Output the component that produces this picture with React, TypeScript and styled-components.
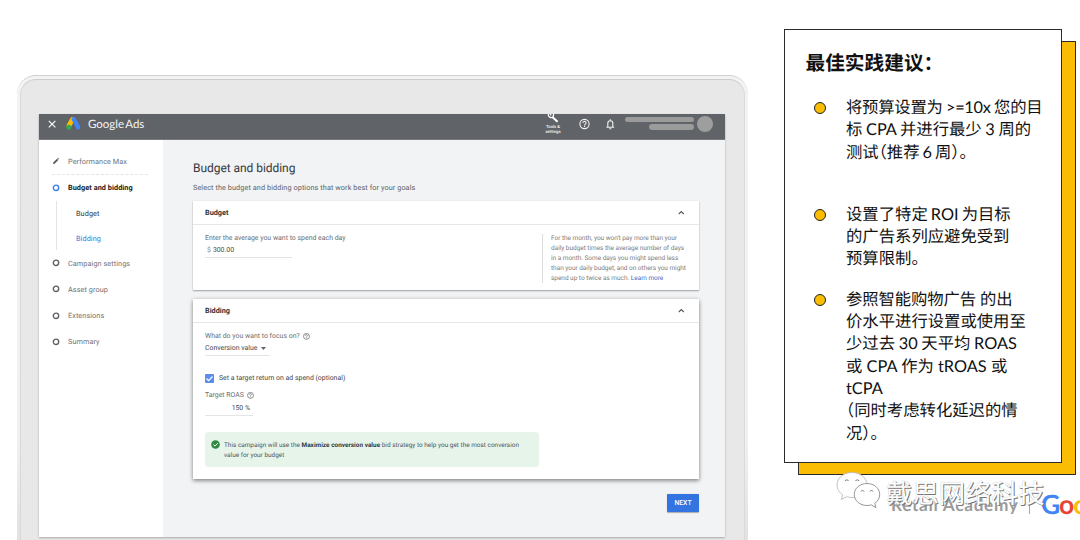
import React from "react";
import styled, { createGlobalStyle } from "styled-components";

const GlobalStyle = createGlobalStyle`
  * { box-sizing: border-box; }
  body {
    margin: 0;
    background: #fff;
    overflow: hidden;
    font-family: Roboto, "Liberation Sans", sans-serif;
    text-rendering: geometricPrecision;
  }
`;

const Slide = styled.div`
  position: relative;
  display: flex;
  align-items: flex-start;
  width: 1080px;
  height: 540px;
  overflow: hidden;
  background: #fff;
`;

/* ---------- laptop frame ---------- */

const Bezel = styled.div`
  flex: none;
  width: 731px;
  height: 480px;
  margin: 75px 0 0 17px;
  padding: 3px;
  border-radius: 19px 19px 0 0;
  border-top: 1px solid #cfcfcf;
  background: linear-gradient(#f3f3f3 0, #f1f1f1 360px, #e2e2e2 460px);
`;

const Lid = styled.div`
  height: 100%;
  padding: 34px 19px 0 18px;
  border: 1px solid #cdcdcd;
  border-left-color: #d8d8d8;
  border-right-color: #dadada;
  border-radius: 16px 16px 0 0;
  background: #e8e8e8;
`;

const Screen = styled.div`
  display: flex;
  flex-direction: column;
  width: 686px;
  height: 423px;
  background: #f1f3f4;
  box-shadow: 0 1px 2px rgba(0, 0, 0, 0.28);
`;

/* ---------- app bar ---------- */

const AppBar = styled.header`
  display: flex;
  align-items: flex-start;
  flex: none;
  height: 26px;
  padding: 0 12px 0 9px;
  background: #606367;
  color: #f4f4f4;
  overflow: hidden;
  border-bottom: 1px solid #77797c;
`;

const AdsMark = styled.svg`
  margin: 2px 0 0 9px;
`;

const AppName = styled.div`
  margin: 4px 0 0 7px;
  font: 400 11.5px/13px Lato, sans-serif;
  letter-spacing: -0.03px;
  word-spacing: -1.2px;
  white-space: nowrap;
`;

const AppTools = styled.div`
  display: flex;
  align-items: flex-start;
  margin-left: auto;
`;

const ToolsLink = styled.div`
  display: flex;
  flex-direction: column;
  align-items: center;
  width: 18px;
  font-size: 4.2px;
  line-height: 5px;
  font-weight: 500;
  text-align: center;
  white-space: nowrap;
`;

const AccountBars = styled.div`
  display: flex;
  flex-direction: column;
  align-items: flex-end;
  gap: 1.5px;
  padding-top: 3px;
  margin: 0 3px 0 10px;
`;

const AccountBar = styled.span<{ $w: number; $h: number }>`
  width: ${(p) => p.$w}px;
  height: ${(p) => p.$h}px;
  border-radius: 3px;
  background: #9b9b9b;
`;

const Avatar = styled.span`
  width: 16px;
  height: 16px;
  margin-top: 2px;
  border-radius: 50%;
  background: #9e9e9e;
`;

/* ---------- side navigation ---------- */

const Body = styled.div`
  display: flex;
  flex: 1;
  min-height: 0;
`;

const SideNav = styled.nav`
  display: flex;
  flex-direction: column;
  flex: none;
  width: 124px;
  padding: 8px 14px 0 13px;
  background: #fff;
  font-size: 7.3px;
  color: #707376;
`;

const NavItem = styled.div<{ $active?: boolean; $first?: boolean }>`
  display: flex;
  align-items: center;
  gap: 8px;
  height: ${(p) => (p.$first ? 26 : 26.2)}px;
  font-weight: ${(p) => (p.$active ? 700 : 400)};
  letter-spacing: ${(p) => (p.$active ? 0.06 : 0.07)}px;
  color: ${(p) => (p.$active ? "#202124" : "inherit")};
  white-space: nowrap;
`;

const NavRule = styled.hr`
  width: 96px;
  margin: 0 0 -0.6px;
  border: 0;
  border-top: 1px dashed #e4e4e4;
`;

const Dot = ({ active }: { active?: boolean }) => (
  <svg width="8" height="8" viewBox="0 0 8 8" fill="none">
    <circle cx="4" cy="3.8" r="2.7" stroke={active ? "#3b7de8" : "#5f6368"} strokeWidth="1.4" />
  </svg>
);

const SubNav = styled.div`
  display: flex;
  flex-direction: column;
  height: 49.6px;
  margin: 0 0 0 4px;
  padding-left: 19px;
  border-left: 1px solid #e3e4e6;
`;

const SubItem = styled.div<{ $current?: boolean }>`
  height: 25px;
  line-height: 25px;
  letter-spacing: 0.07px;
  color: ${(p) => (p.$current ? "#3b78d8" : "#333639")};
`;

/* ---------- main column ---------- */

const Main = styled.main`
  display: flex;
  flex-direction: column;
  flex: 1;
  padding: 21px 26px 0 30px;
`;

const PageTitle = styled.h1`
  margin: 0;
  font-size: 12px;
  line-height: 15px;
  font-weight: 400;
  letter-spacing: -0.05px;
  color: #36393c;
`;

const PageLead = styled.p`
  margin: 7px 0 9px;
  font-size: 7.3px;
  line-height: 9px;
  letter-spacing: 0.08px;
  color: #5f6368;
  white-space: nowrap;
`;

const Panel = styled.section<{ $height: number; $raised?: boolean }>`
  flex: none;
  height: ${(p) => p.$height}px;
  margin-bottom: 8.5px;
  background: #fff;
  box-shadow: ${(p) =>
    p.$raised
      ? "0 2px 4px rgba(0,0,0,.38), 0 0 4px rgba(0,0,0,.14)"
      : "0 1px 1.5px rgba(0,0,0,.33), 0 0 1px rgba(0,0,0,.1)"};
`;

const PanelHead = styled.div`
  display: flex;
  align-items: center;
  justify-content: space-between;
  height: 24px;
  padding: 0 14px 0 12px;
  border-bottom: 1px solid #e6e7e8;
  font-size: 7.3px;
  font-weight: 700;
  color: #303336;
`;

const PanelBody = styled.div`
  display: flex;
  padding: 9px 12px 0;
  font-size: 6.9px;
  line-height: 9px;
  color: #6a6d70;
  white-space: nowrap;
`;

const Column = styled.div`
  display: flex;
  flex-direction: column;
  align-items: flex-start;
`;

const Line = styled.div<{ $top?: number; $dark?: boolean }>`
  display: flex;
  align-items: center;
  height: 9px;
  margin-top: ${(p) => p.$top ?? 0}px;
  letter-spacing: 0.015px;
  color: ${(p) => (p.$dark ? "#44474a" : "inherit")};
`;

const Field = styled.div<{ $w: number; $top: number; $pad?: number; $end?: boolean }>`
  display: flex;
  align-items: flex-start;
  justify-content: ${(p) => (p.$end ? "flex-end" : "flex-start")};
  width: ${(p) => p.$w}px;
  height: 12px;
  margin-top: ${(p) => p.$top}px;
  padding: 0 ${(p) => p.$pad ?? 2}px;
  border-bottom: 1px solid #e3e4e5;
  color: #44474a;
`;

const Currency = styled.span`
  margin-right: 2px;
  color: #85888b;
`;

const Caret = styled.svg`
  margin: 3px 0 0 3.5px;
`;

const Aside = styled.div`
  margin-left: auto;
  padding-left: 8px;
  height: 49px;
  width: 145px;
  border-left: 1px solid #dcdddf;
  font-size: 6.5px;
  line-height: 9.9px;
  letter-spacing: -0.035px;
  color: #7b7e81;
`;

const Learn = styled.span`
  color: #3f6fc8;
`;

const Check = styled.span`
  display: flex;
  width: 9px;
  height: 9px;
  margin-right: 5px;
  border-radius: 1px;
  background: #5b8def;
`;

const Notice = styled.div`
  display: flex;
  gap: 4px;
  width: 334px;
  height: 35.5px;
  margin-top: 16px;
  padding: 8px 6px;
  border-radius: 3px;
  background: #e7f4ea;
  font-size: 6.4px;
  line-height: 10px;
  letter-spacing: 0.022px;
  color: #50575a;
  b { color: #34393b; }
`;

const NextButton = styled.button`
  align-self: flex-end;
  width: 32px;
  height: 18px;
  margin: 6px 0 0;
  padding: 0;
  border: 0;
  border-radius: 1px;
  background: #3374e0;
  box-shadow: 0 0.5px 1px rgba(0, 0, 0, 0.3);
  color: #fff;
  font: 500 6.8px/18px Roboto, sans-serif;
`;

/* ---------- advice card ---------- */

const Card = styled.aside`
  position: relative;
  z-index: 1;
  flex: none;
  width: 278px;
  height: 434px;
  margin: 29px 0 0 36px;
  padding: 22px 0 0 20.5px;
  border: 1px solid #2a2a2a;
  background: #fff;
  color: #111;
  font-family: Lato, "Noto Sans CJK SC", sans-serif;
`;

const CardBack = styled.div`
  position: absolute;
  left: 798px;
  top: 41px;
  width: 278px;
  height: 434px;
  border: 1px solid #2a2a2a;
  background: #fbbc04;
`;

const CardTitle = styled.h2`
  margin: 0 0 21px;
  font-size: 19.7px;
  line-height: 24px;
  font-weight: 700;
  white-space: nowrap;
  font-feature-settings: "halt";
`;

const Advice = styled.div<{ $gap: number }>`
  display: flex;
  gap: 20px;
  margin: 0 0 ${(p) => p.$gap}px 8.5px;
`;

const Bullet = styled.i`
  flex: none;
  width: 12px;
  height: 12px;
  margin-top: 5px;
  border: 1px solid #222;
  border-radius: 50%;
  background: #fbbc04;
`;

const AdviceText = styled.div`
  font-size: 16.35px;
  line-height: 22.3px;
  font-feature-settings: "halt";
  white-space: nowrap;
`;

const AdviceLine = styled.div<{ $word: number; $track: number }>`
  height: 22.3px;
  word-spacing: ${(p) => p.$word}px;
  letter-spacing: ${(p) => p.$track}px;
`;

/* ---------- footer branding ---------- */

const Branding = styled.footer`
  position: absolute;
  left: 891px;
  top: 489px;
  display: flex;
  align-items: center;
  height: 30px;
  white-space: nowrap;
`;

const Academy = styled.span`
  width: 138px;
  font: 700 17.2px/29px Lato, sans-serif;
  letter-spacing: 0.7px;
  color: #9a9a9a;
`;

const Divider = styled.span`
  width: 1px;
  height: 20px;
  margin-right: 11px;
  background: #a6a6a6;
`;

const Wordmark = styled.span`
  font: 700 26.5px/28px Lato, sans-serif;
  letter-spacing: -1px;
`;

const Tint = styled.span<{ $c: string }>`
  color: ${(p) => p.$c};
`;

const Watermark = styled.div`
  position: absolute;
  left: 835px;
  top: 470px;
  display: flex;
  align-items: flex-start;
  gap: 5px;
`;

const WatermarkText = styled.span`
  font: 400 26.4px/43px "Noto Sans CJK SC", sans-serif;
  color: #fff;
  text-shadow: 1px 1px 0.5px #777, 0 0 1px #aaa;
  white-space: nowrap;
`;

const HelpIcon = () => (
  <svg width="7" height="7" viewBox="0 0 24 24" fill="none" stroke="currentColor" strokeWidth="2.6">
    <circle cx="12" cy="11.5" r="10.2" />
    <path d="M8.8 9.1a3.2 3.2 0 1 1 5 2.6c-1.2.9-1.8 1.3-1.8 2.8M12 15.8V18" />
  </svg>
);

const ChevronUp = () => (
  <svg width="7" height="5" viewBox="0 0 7 5" fill="none" stroke="#55585b" strokeWidth="1.1">
    <path d="M.8 4 3.3 1.5 5.8 4" />
  </svg>
);

const advice: { gap: number; lines: [string, number, number][] }[] = [
  {
    gap: 40,
    lines: [
      ["将预算设置为 >=10x 您的目", -0.6, -0.25],
      ["标 CPA 并进行最少 3 周的", -0.4, -0.05],
      ["测试（推荐 6 周）。", -1.2, 0],
    ],
  },
  {
    gap: 18,
    lines: [
      ["设置了特定 ROI 为目标", -1.1, 0],
      ["的广告系列应避免受到", 0, 0],
      ["预算限制。", 0, 0],
    ],
  },
  {
    gap: 0,
    lines: [
      ["参照智能购物广告 的出", 0, -0.1],
      ["价水平进行设置或使用至", 0, 0],
      ["少过去 30 天平均 ROAS", -0.5, 0],
      ["或 CPA 作为 tROAS 或", 0, 0],
      ["tCPA", 0, 0],
      ["（同时考虑转化延迟的情", 0, 0],
      ["况）。", 0, 0],
    ],
  },
];

export default function App() {
  return (
    <Slide>
      <GlobalStyle />
      <Bezel>
        <Lid>
          <Screen>
            <AppBar>
              <svg width="9" height="20" viewBox="0 0 9 20" stroke="#fff" strokeWidth="1.1">
                <path d="M.8 6.8 7.4 13.4M7.4 6.8.8 13.4" />
              </svg>
              <AdsMark width="15" height="15" viewBox="0 0 15 15">
                <path d="M6.4 3.4 3 9.6" stroke="#fbbc04" strokeWidth="4.8" strokeLinecap="round" />
                <circle cx="2.9" cy="11.2" r="2.5" fill="#34a853" />
                <path d="M7.8 3.3 12.1 11.2" stroke="#4285f4" strokeWidth="4.4" strokeLinecap="round" />
              </AdsMark>
              <AppName>Google Ads</AppName>
              <AppTools>
                <ToolsLink>
                  <svg width="12" height="11" viewBox="0 0 12 11" fill="none" stroke="#fff">
                    <path d="M5.6 3.3 10.6 7.8" strokeWidth="2" />
                    <path d="M1.5 0a2.7 2.7 0 0 0 4.6 2.6L6.7 0M3 .3l1.3 1" strokeWidth="1.3" />
                  </svg>
                  <span>Tools &amp;</span>
                  <span>settings</span>
                </ToolsLink>
                <svg width="44" height="20" viewBox="0 0 44 20" fill="none" stroke="#f2f2f2" strokeWidth="1.1">
                  <circle cx="22.5" cy="10" r="4.6" />
                  <path d="M21 8.9a1.5 1.5 0 1 1 2.4 1.2c-.6.4-.9.6-.9 1.3M22.5 11.9v1" />
                </svg>
                <svg width="9" height="20" viewBox="0 0 9 20" fill="none" stroke="#f2f2f2" strokeWidth="1.1">
                  <path d="M.4 13.3h7.8M1.8 13V9.2a2.5 2.5 0 0 1 5 0V13M4.3 5.2v1.2M3.3 14.8h2" />
                </svg>
                <AccountBars>
                  <AccountBar $w={69} $h={5} />
                  <AccountBar $w={45} $h={6.3} />
                </AccountBars>
                <Avatar />
              </AppTools>
            </AppBar>
            <Body>
              <SideNav>
                <NavItem $first>
                  <svg width="8" height="8" viewBox="0 0 8 8">
                    <path d="M1 7l.3-1.6L5 1.7 6.3 3 2.6 6.7zM5.4 1.3 6 .7 7.3 2l-.6.6z" fill="#55585b" />
                  </svg>
                  <span>Performance Max</span>
                </NavItem>
                <NavRule />
                <NavItem $active>
                  <Dot active />
                  <span>Budget and bidding</span>
                </NavItem>
                <SubNav>
                  <SubItem>Budget</SubItem>
                  <SubItem $current>Bidding</SubItem>
                </SubNav>
                {["Campaign settings", "Asset group", "Extensions", "Summary"].map((label) => (
                  <NavItem key={label}>
                    <Dot />
                    <span>{label}</span>
                  </NavItem>
                ))}
              </SideNav>
              <Main>
                <PageTitle>Budget and bidding</PageTitle>
                <PageLead>Select the budget and bidding options that work best for your goals</PageLead>
                <Panel $height={89}>
                  <PanelHead>
                    <span>Budget</span>
                    <ChevronUp />
                  </PanelHead>
                  <PanelBody>
                    <Column>
                      <Line>Enter the average you want to spend each day</Line>
                      <Field $w={87} $top={3}>
                        <Currency>$</Currency>300.00
                      </Field>
                    </Column>
                    <Aside>
                      For the month, you won't pay more than your
                      <br />
                      daily budget times the average number of days
                      <br />
                      in a month. Some days you might spend less
                      <br />
                      than your daily budget, and on others you might
                      <br />
                      spend up to twice as much. <Learn>Learn more</Learn>
                    </Aside>
                  </PanelBody>
                </Panel>
                <Panel $height={180.5} $raised>
                  <PanelHead>
                    <span>Bidding</span>
                    <ChevronUp />
                  </PanelHead>
                  <PanelBody>
                    <Column>
                      <Line>
                        What do you want to focus on?&nbsp;&nbsp;
                        <HelpIcon />
                      </Line>
                      <Field $w={65} $top={3} $pad={0}>
                        Conversion value
                        <Caret width="5" height="3" viewBox="0 0 5 3">
                          <path d="M0 0h5L2.5 3z" fill="#606367" />
                        </Caret>
                      </Field>
                      <Line $top={18} $dark>
                        <Check>
                          <svg width="9" height="9" viewBox="0 0 9 9" fill="none" stroke="#fff" strokeWidth="1.2">
                            <path d="M1.5 4.5 3.6 6.6 7.5 2.5" />
                          </svg>
                        </Check>
                        Set a target return on ad spend (optional)
                      </Line>
                      <Line $top={8}>
                        Target ROAS&nbsp;&nbsp;
                        <HelpIcon />
                      </Line>
                      <Field $w={48} $top={4} $pad={3} $end>
                        150 %
                      </Field>
                      <Notice>
                        <svg width="9" height="9" viewBox="0 0 9 9">
                          <circle cx="4.5" cy="4.5" r="4.3" fill="#2e8b41" />
                          <path d="M2.4 4.6 4 6.1 6.8 3.2" fill="none" stroke="#fff" strokeWidth="1" />
                        </svg>
                        <div>
                          This campaign will use the <b>Maximize conversion value</b> bid strategy to help you get the most conversion
                          <br />
                          value for your budget
                        </div>
                      </Notice>
                    </Column>
                  </PanelBody>
                </Panel>
                <NextButton>NEXT</NextButton>
              </Main>
            </Body>
          </Screen>
        </Lid>
      </Bezel>
      <CardBack />
      <Card>
        <CardTitle>最佳实践建议：</CardTitle>
        {advice.map((item, i) => (
          <Advice key={i} $gap={item.gap}>
            <Bullet />
            <AdviceText>
              {item.lines.map(([line, word, track]) => (
                <AdviceLine key={line} $word={word} $track={track}>
                  {line}
                </AdviceLine>
              ))}
            </AdviceText>
          </Advice>
        ))}
      </Card>
      <Branding>
        <Academy>Retail Academy</Academy>
        <Divider />
        <Wordmark>
          <Tint $c="#4285f4">G</Tint>
          <Tint $c="#ea4335">o</Tint>
          <Tint $c="#fbbc04">o</Tint>
        </Wordmark>
      </Branding>
      <Watermark>
        <svg width="46" height="42" viewBox="0 0 46 42">
          <g fill="#fff" stroke="#8a8a8a" strokeWidth="0.9">
            <path d="M17 2.5C8.500 2.500 2 8 2 15c0 4 2.200 7.500 5.700 9.800L6.300 29.500l5.500-2.800c1.700.5 3.400.8 5.200.8 8.300 0 15-5.500 15-12.500S25.300 2.500 17 2.500z" stroke="#bbb" />
            <path d="M32 13.500c-7 0-12.700 4.700-12.700 11S25 35.500 32 35.500c1.500 0 3-.2 4.300-.6l4.700 2.800-1.200-4.300c3-2 4.900-5.200 4.900-8.900 0-6.300-5.700-11-12.700-11z" />
          </g>
          <g fill="none" stroke="#777" strokeWidth="1">
            <path d="M10 11a2 2 0 0 1 3.600 0M20.500 11a2 2 0 0 1 3.600 0M26 21.500a1.600 1.600 0 0 1 3 0M35 21.500a1.600 1.600 0 0 1 3 0" />
          </g>
        </svg>
        <WatermarkText>戴思网络科技</WatermarkText>
      </Watermark>
    </Slide>
  );
}
